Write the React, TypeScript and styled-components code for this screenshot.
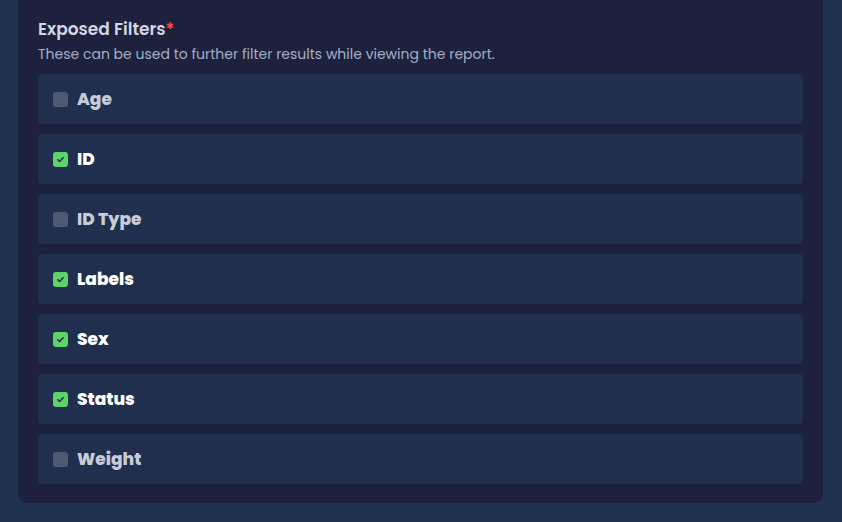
import styled, { createGlobalStyle } from "styled-components";

const GlobalStyle = createGlobalStyle`
  body {
    margin: 0;
    background: #1f3351;
    font-family: Poppins, Inter, "Noto Sans", sans-serif;
  }
`;

const Page = styled.div`
  padding: 0 19px 19px 18px;
`;

const Panel = styled.section`
  background: #1e213d;
  border-radius: 0 0 9px 9px;
  padding: 17px 20px 19px;
`;

const Title = styled.h2`
  margin: 0;
  font-size: 17px;
  line-height: 24px;
  font-weight: 600;
  color: #d3d7e2;
`;

const Required = styled.span`
  color: #f0525a;
`;

const Hint = styled.p`
  margin: 2px 0 9px;
  font-size: 14px;
  line-height: 22px;
  color: #a3aec4;
`;

const List = styled.div`
  display: flex;
  flex-direction: column;
  gap: 10px;
`;

const Row = styled.label`
  display: flex;
  align-items: center;
  gap: 9px;
  height: 50px;
  padding: 0 15px;
  background: #1f2f4d;
  border-radius: 4px;
`;

const Box = styled.span<{ $on: boolean }>`
  width: 15px;
  height: 15px;
  border-radius: 3px;
  display: flex;
  align-items: center;
  justify-content: center;
  background: ${(p) => (p.$on ? "#5ed36a" : "#4f5a72")};
`;

const Label = styled.span<{ $on: boolean }>`
  font-size: 17px;
  font-weight: 800;
  color: ${(p) => (p.$on ? "#ffffff" : "#c6ccd8")};
`;

const filters = [
  { name: "Age", on: false },
  { name: "ID", on: true },
  { name: "ID Type", on: false },
  { name: "Labels", on: true },
  { name: "Sex", on: true },
  { name: "Status", on: true },
  { name: "Weight", on: false },
];

const App = () => {
  return (
    <Page>
      <GlobalStyle />
      <Panel>
        <Title>
          Exposed Filters<Required>*</Required>
        </Title>
        <Hint>These can be used to further filter results while viewing the report.</Hint>
        <List>
          {filters.map((f) => (
            <Row key={f.name}>
              <Box $on={f.on}>
                {f.on && (
                  <svg width="9" height="9" viewBox="0 0 10 10">
                    <path d="M2 5.2l2 2 4-4.2" fill="none" stroke="#1e2b3c" strokeWidth="1.6" strokeLinecap="round" strokeLinejoin="round" />
                  </svg>
                )}
              </Box>
              <Label $on={f.on}>{f.name}</Label>
            </Row>
          ))}
        </List>
      </Panel>
    </Page>
  );
};

export default App;
